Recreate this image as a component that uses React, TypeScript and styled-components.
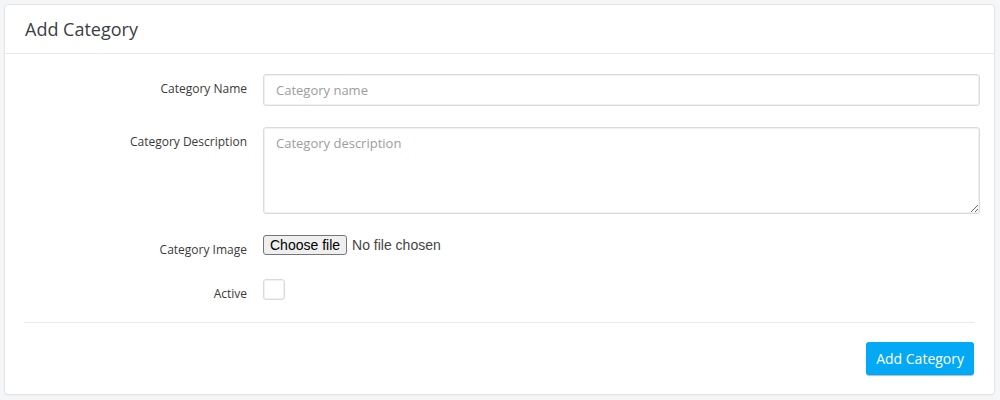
import React from "react";
import styled, { createGlobalStyle } from "styled-components";

const GlobalStyle = createGlobalStyle`
  html, body { margin: 0; padding: 0; background: #f5f6f7; }
  body { font-family: "Open Sans", "DejaVu Sans", sans-serif; }
  * { box-sizing: border-box; }
`;

const Page = styled.div`
  padding: 4px 5px 5px 4px;
`;

const Card = styled.section`
  background: #fff;
  border: 1px solid #e3e6e9;
  border-radius: 4px;
  box-shadow: 0 1px 2px rgba(0, 0, 0, 0.04);
`;

const CardHeader = styled.header`
  height: 49px;
  padding: 0 20px;
  display: flex;
  align-items: center;
  border-bottom: 1px solid #e6e9ec;
`;

const Title = styled.h3`
  margin: 0;
  font-size: 18px;
  font-weight: 400;
  color: #3b4046;
  line-height: 24px;
`;

const CardBody = styled.div`
  padding: 20px 19px 19px 19px;
`;

const Form = styled.form`
  display: grid;
  grid-template-columns: 223px 1fr;
  column-gap: 16px;
  row-gap: 21px;
  margin-right: -5px;
`;

const Label = styled.label`
  text-align: right;
  font-size: 12px;
  line-height: 16px;
  padding-top: 7px;
  color: #3a3a3a;
`;

const TextInput = styled.input`
  width: 100%;
  height: 32px;
  border: 1px solid #d8dce0;
  border-radius: 3px;
  padding: 0 12px;
  font-family: "Open Sans", sans-serif;
  font-size: 13px;
  color: #333;
  box-shadow: inset 0 0 0 1px #eef0f2;
  outline: none;
  &::placeholder { color: #9a9da0; }
`;

const TextArea = styled.textarea`
  width: 100%;
  height: 87px;
  display: block;
  border: 1px solid #d8dce0;
  border-radius: 3px;
  padding: 6px 12px;
  font-family: "Open Sans", sans-serif;
  font-size: 13px;
  line-height: 18px;
  color: #333;
  resize: vertical;
  box-shadow: inset 0 0 0 1px #eef0f2;
  outline: none;
  &::placeholder { color: #9a9da0; }
`;

const FilePicker = styled.label`
  display: flex;
  align-items: center;
  gap: 5px;
  align-self: start;
  height: 20px;
  font-family: "Liberation Sans", Arial, sans-serif;
  font-size: 14px;
  color: #444;
  cursor: pointer;
`;

const HiddenFile = styled.input`
  display: none;
`;

const FileButton = styled.span`
  display: inline-flex;
  align-items: center;
  height: 20px;
  padding: 0 6px;
  background: #efefef;
  border: 1px solid #767676;
  border-radius: 3px;
  color: #000;
`;

const CheckBox = styled.input`
  appearance: none;
  margin: 0;
  width: 22px;
  height: 21px;
  border: 1px solid #d6dadd;
  border-radius: 3px;
  background: #fff;
  box-shadow: inset 0 0 0 1px #eef0f2;
`;

const Divider = styled.hr`
  border: 0;
  border-top: 1px solid #e9ebed;
  margin: 20px 0 19px 0;
`;

const Actions = styled.div`
  display: flex;
  justify-content: flex-end;
  padding-right: 1px;
`;

const Button = styled.button`
  height: 33px;
  padding: 0 10px;
  background: #03a9f4;
  color: #fff;
  border: 0;
  border-radius: 3px;
  box-shadow: 0 1px 1px rgba(0, 60, 100, 0.35);
  font-family: "Open Sans", sans-serif;
  font-size: 14px;
  cursor: pointer;
`;

export default function App() {
  return (
    <>
      <GlobalStyle />
      <Page>
        <Card>
          <CardHeader>
            <Title>Add Category</Title>
          </CardHeader>
          <CardBody>
            <Form onSubmit={(e) => e.preventDefault()}>
              <Label htmlFor="cname">Category Name</Label>
              <TextInput id="cname" type="text" placeholder="Category name" />
              <Label htmlFor="cdesc">Category Description</Label>
              <TextArea id="cdesc" placeholder="Category description" />
              <Label htmlFor="cimg">Category Image</Label>
              <FilePicker>
                <HiddenFile id="cimg" type="file" />
                <FileButton>Choose file</FileButton>
                <span>No file chosen</span>
              </FilePicker>
              <Label htmlFor="cactive">Active</Label>
              <CheckBox id="cactive" type="checkbox" />
            </Form>
            <Divider />
            <Actions>
              <Button type="button">Add Category</Button>
            </Actions>
          </CardBody>
        </Card>
      </Page>
    </>
  );
}
